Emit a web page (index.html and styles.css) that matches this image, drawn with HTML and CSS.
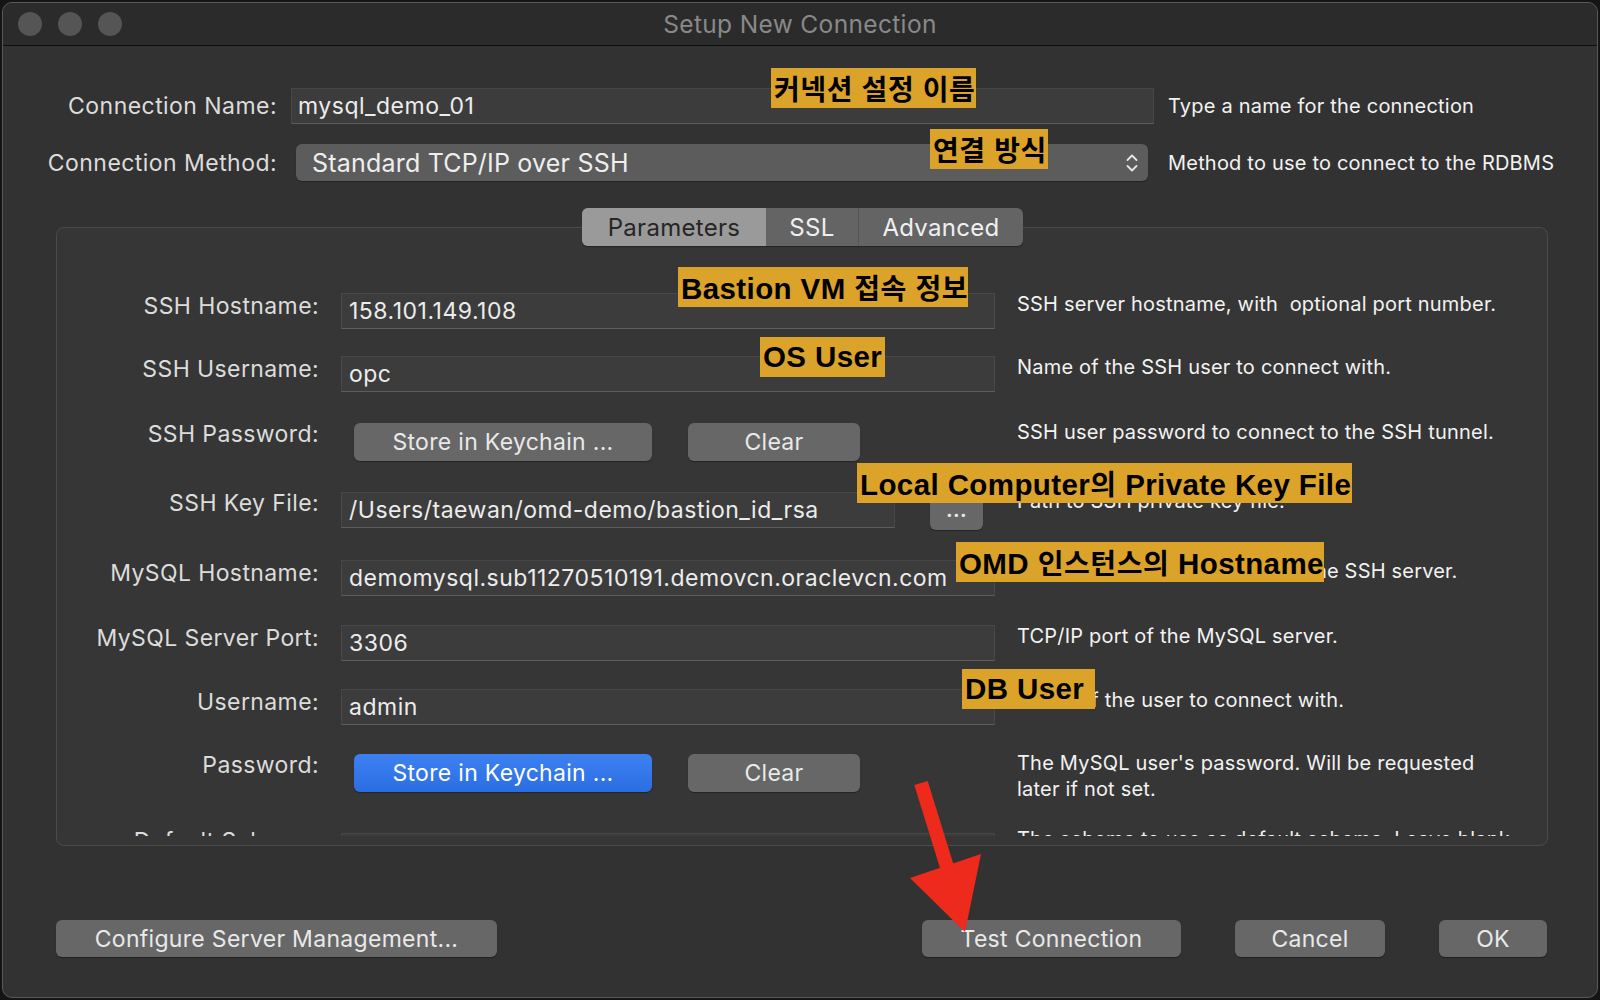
FILE: index.html
```html
<!DOCTYPE html>
<html lang="ko">
<head>
<meta charset="utf-8">
<title>Setup New Connection</title>
<link rel="stylesheet" href="styles.css">
</head>
<body>
<div class="window">
  <div class="titlebar">
    <div class="lights"><span class="light"></span><span class="light"></span><span class="light"></span></div>
    <div class="title">Setup New Connection</div>
    <div></div>
  </div>

  <div class="top-form">
    <div class="lbl-top">Connection Name:</div>
    <div class="inp inp-top">mysql_demo_01</div>
    <div class="desc-top">Type a name for the connection</div>

    <div class="lbl-top">Connection Method:</div>
    <div class="select">
      <span>Standard TCP/IP over SSH</span>
      <svg class="chev" width="12" height="24" viewBox="0 0 12 24"><path d="M1.5 9 L6 4.5 L10.5 9" fill="none" stroke="#e6e6e6" stroke-width="1.8" stroke-linecap="round" stroke-linejoin="round"/><path d="M1.5 15 L6 19.5 L10.5 15" fill="none" stroke="#e6e6e6" stroke-width="1.8" stroke-linecap="round" stroke-linejoin="round"/></svg>
    </div>
    <div class="desc-top">Method to use to connect to the RDBMS</div>
  </div>

  <div class="tabs">
    <div class="seg">
      <span class="tab tab-on">Parameters</span>
      <span class="tab tab-ssl">SSL</span>
      <span class="tab tab-adv">Advanced</span>
    </div>
  </div>

  <div class="panel">
    <div class="panel-body">
      <div class="lbl">SSH Hostname:</div>
      <div class="inp">158.101.149.108</div>
      <div class="desc">SSH server hostname, with&nbsp; optional port number.</div>

      <div class="lbl">SSH Username:</div>
      <div class="inp">opc</div>
      <div class="desc">Name of the SSH user to connect with.</div>

      <div class="lbl">SSH Password:</div>
      <div class="btns">
        <div class="btn btn-store">Store in Keychain ...</div>
        <div class="btn btn-clear">Clear</div>
      </div>
      <div class="desc">SSH user password to connect to the SSH tunnel.</div>

      <div class="lbl">SSH Key File:</div>
      <div class="keyrow">
        <div class="inp inp-key">/Users/taewan/omd-demo/bastion_id_rsa</div>
        <div class="btn btn-dots">...</div>
      </div>
      <div class="desc">Path to SSH private key file.</div>

      <div class="lbl">MySQL Hostname:</div>
      <div class="inp">demomysql.sub11270510191.demovcn.oraclevcn.com</div>
      <div class="desc">MySQL server host relative to the SSH server.</div>

      <div class="lbl">MySQL Server Port:</div>
      <div class="inp">3306</div>
      <div class="desc">TCP/IP port of the MySQL server.</div>

      <div class="lbl">Username:</div>
      <div class="inp">admin</div>
      <div class="desc">Name of the user to connect with.</div>

      <div class="lbl">Password:</div>
      <div class="btns">
        <div class="btn btn-store btn-blue">Store in Keychain ...</div>
        <div class="btn btn-clear">Clear</div>
      </div>
      <div class="desc">The MySQL user's password. Will be requested<br>later if not set.</div>

      <div class="lbl">Default Schema:</div>
      <div class="inp inp-last"></div>
      <div class="desc">The schema to use as default schema. Leave blank<br>to select it later.</div>
    </div>
  </div>

  <div class="footer">
    <div class="btn fbtn btn-config">Configure Server Management...</div>
    <div class="btn fbtn btn-test">Test Connection</div>
    <div class="btn fbtn btn-cancel">Cancel</div>
    <div class="btn fbtn btn-ok">OK</div>
  </div>

  <div class="ann ann-1"><span class="ko">커넥션 설정 이름</span></div>
  <div class="ann ann-2"><span class="ko">연결 방식</span></div>
  <div class="ann ann-3">Bastion VM <span class="ko">접속 정보</span></div>
  <div class="ann ann-4">OS User</div>
  <div class="ann ann-5">Local Computer<span class="ko">의</span> Private Key File</div>
  <div class="ann ann-6">OMD <span class="ko">인스턴스의</span> Hostname</div>
  <div class="ann ann-7">DB User</div>

  <svg class="arrow" width="95" height="170" viewBox="0 0 95 170">
    <line x1="21" y1="8" x2="47" y2="92" stroke="#ee2a1d" stroke-width="14"/>
    <polygon points="10,103 81,79 65,157" fill="#ee2a1d"/>
  </svg>
</div>
</body>
</html>
```

FILE: styles.css
```css
html, body {
  margin: 0;
  padding: 0;
}
body {
  width: 1600px;
  height: 1000px;
  overflow: hidden;
  background: #151515;
  font-family: Inter, "Noto Sans", "Noto Sans CJK KR", sans-serif;
  color: #e6e6e6;
}
.window {
  position: relative;
  margin: 2px;
  height: 994px;
  border: 1px solid #595959;
  border-radius: 10px;
  background: #323232;
  overflow: hidden;
}
.titlebar {
  height: 42px;
  border-bottom: 1px solid #0e0e0e;
  background: #2b2b2b;
  display: grid;
  grid-template-columns: 1fr auto 1fr;
  align-items: center;
}
.lights {
  display: flex;
  gap: 16px;
  padding-left: 15px;
}
.light {
  width: 24px;
  height: 24px;
  border-radius: 50%;
  background: #555555;
}
.title {
  font-size: 24.5px;
  color: #898989;
  letter-spacing: 0.35px;
}

/* top form */
.top-form {
  display: grid;
  grid-template-columns: 274px 863px 1fr;
  grid-template-rows: 36px 37px;
  column-gap: 14px;
  row-gap: 20px;
  padding-top: 42px;
}
.lbl-top {
  align-self: center;
  text-align: right;
  font-size: 23px;
  color: #dcdcdc;
  letter-spacing: 0.45px;
}
.desc-top {
  align-self: center;
  font-size: 20px;
  color: #f2f2f2;
  letter-spacing: 0.2px;
  white-space: nowrap;
}
.inp {
  box-sizing: border-box;
  height: 36px;
  margin-top: 19px;
  padding-left: 7px;
  display: flex;
  align-items: center;
  background: #3c3c3c;
  border: 1px solid #474747;
  border-bottom-color: #5d5d5d;
  font-size: 23px;
  letter-spacing: 0.5px;
  color: #ececec;
  white-space: nowrap;
  overflow: hidden;
}
.inp-top {
  margin-top: 0;
  padding-left: 6px;
}
.inp-last {
  margin-top: 24px;
}
.select {
  margin: 0 6px 0 5px;
  border-radius: 6px;
  background: #5c5c5c;
  display: flex;
  align-items: center;
  justify-content: space-between;
  padding: 0 10px 0 16px;
  font-size: 25px;
  letter-spacing: 0.2px;
  color: #eeeeee;
  box-shadow: 0 1px 1px rgba(0,0,0,0.3);
}
.chev {
  display: block;
}

/* tabs */
.tabs {
  position: relative;
  z-index: 1;
  display: flex;
  justify-content: center;
  padding-left: 5px;
  margin-top: 27px;
  margin-bottom: -19px;
}
.seg {
  display: flex;
  height: 38px;
  border-radius: 6px;
  overflow: hidden;
  background: #646464;
  box-shadow: 0 1px 1px rgba(0,0,0,0.35);
}
.tab {
  display: flex;
  align-items: center;
  justify-content: center;
  font-size: 24px;
  color: #f0f0f0;
  letter-spacing: 0.3px;
}
.tab-on {
  width: 184px;
  background: #9a9a9a;
  color: #262626;
}
.tab-ssl {
  width: 92px;
  border-right: 1px solid #575757;
}
.tab-adv {
  width: 164px;
}

/* panel */
.panel {
  margin: 0 49px 0 53px;
  border: 1px solid #4b4b4b;
  border-radius: 8px;
  background: #363636;
  padding: 46px 0 9px;
}
.panel-body {
  height: 562px;
  overflow: hidden;
  display: grid;
  grid-template-columns: 262px 654px 500px;
  grid-template-rows: 63px 65px 69px 70px 65px 64px 63px 76px 64px;
  column-gap: 22px;
}
.lbl {
  margin-top: 19px;
  text-align: right;
  font-size: 23px;
  line-height: 26px;
  color: #dcdcdc;
  letter-spacing: 0.4px;
  white-space: nowrap;
}
.desc {
  margin-top: 17px;
  font-size: 20px;
  line-height: 26px;
  color: #f2f2f2;
  letter-spacing: 0.2px;
  white-space: nowrap;
}
.btns {
  margin-top: 21px;
  display: flex;
  gap: 36px;
  padding-left: 13px;
}
.btn {
  box-sizing: border-box;
  height: 38px;
  border-radius: 6px;
  background: #676767;
  color: #e9e9e9;
  font-size: 23px;
  letter-spacing: 0.3px;
  display: flex;
  align-items: center;
  justify-content: center;
  white-space: nowrap;
  box-shadow: 0 1px 1px rgba(0,0,0,0.35);
}
.btn-store {
  width: 298px;
}
.btn-clear {
  width: 172px;
}
.btn-blue {
  background: linear-gradient(#3c81f2, #2b6ee2);
  color: #ffffff;
}
.keyrow {
  margin-top: 21px;
  display: flex;
  align-items: flex-start;
  gap: 35px;
}
.inp-key {
  margin-top: 0;
  width: 554px;
  flex: none;
}
.btn-dots {
  width: 53px;
  height: 36px;
  margin-top: 2px;
  font-size: 20px;
  font-weight: 700;
  padding-bottom: 4px;
}

/* footer */
.footer {
  display: flex;
  gap: 54px;
  margin-top: 74px;
  padding: 0 50px 0 53px;
}
.fbtn {
  height: 37px;
}
.btn-config {
  width: 441px;
  margin-right: auto;
}
.btn-test {
  width: 259px;
}
.btn-cancel {
  width: 150px;
}
.btn-ok {
  width: 108px;
}

/* annotations (overlays) */
.ann {
  position: absolute;
  box-sizing: border-box;
  height: 40px;
  line-height: 40px;
  padding: 0 3px;
  background: #dca32b;
  color: #000000;
  font-family: "Liberation Sans", "Noto Sans CJK KR", sans-serif;
  font-weight: 700;
  font-size: 29.5px;
  letter-spacing: 0.4px;
  white-space: nowrap;
  z-index: 3;
}
.ko {
  font-family: "Noto Sans CJK KR", sans-serif;
  font-size: 28px;
  letter-spacing: 0.6px;
}
.ann-1 { left: 768px; top: 65px; width: 205px; }
.ann-2 { left: 927px; top: 126px; width: 118px; }
.ann-3 { left: 675px; top: 264px; width: 290px; }
.ann-4 { left: 757px; top: 334px; width: 125px; }
.ann-5 { left: 854px; top: 460px; width: 495px; }
.ann-6 { left: 953px; top: 539px; width: 368px; }
.ann-7 { left: 959px; top: 666px; width: 133px; }

.arrow {
  position: absolute;
  left: 897px;
  top: 772px;
  z-index: 4;
}
```
